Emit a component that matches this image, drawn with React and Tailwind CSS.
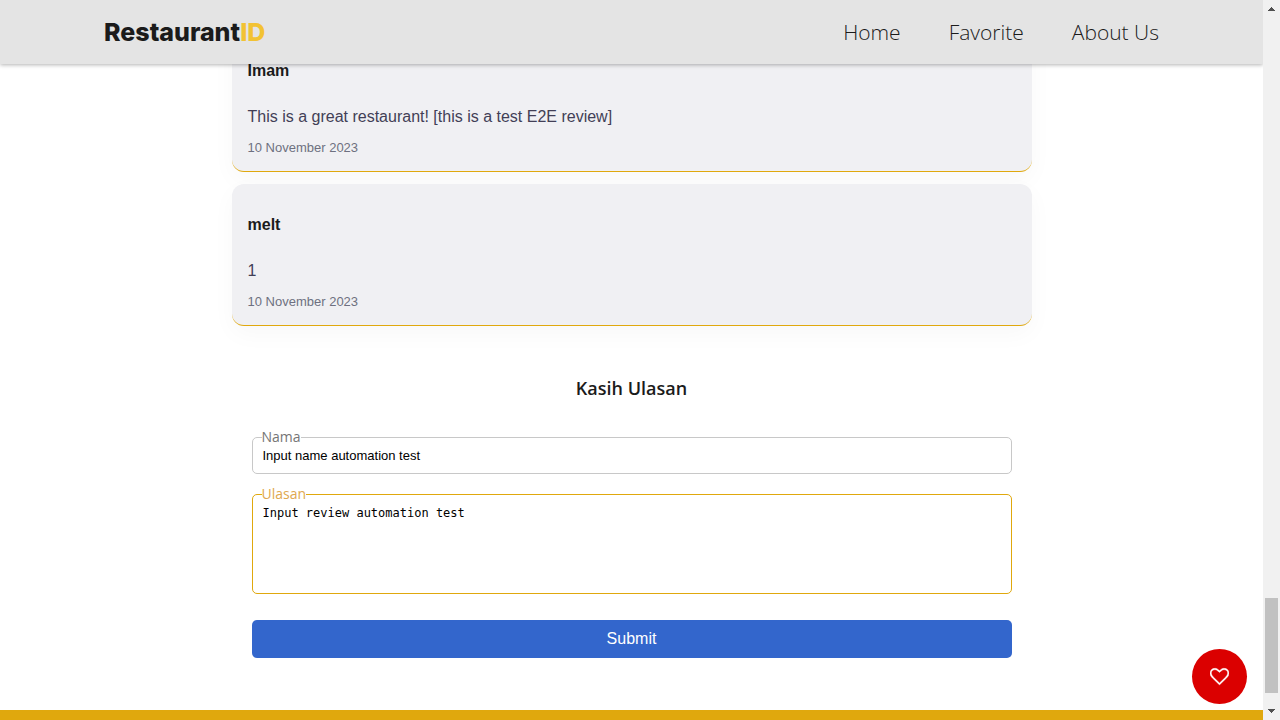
const reviews = [
  { name: "Imam", text: "This is a great restaurant! [this is a test E2E review]", date: "10 November 2023" },
  { name: "melt", text: "1", date: "10 November 2023" },
];

function Header() {
  return (
    <header className="absolute inset-x-0 top-0 z-10 flex h-16 items-center justify-between bg-[#e4e4e4] px-26 shadow-[0_1px_4px_rgba(0,0,0,0.3)]">
      <a href="#home" className="font-['Inter',sans-serif] text-[25px] leading-7 font-extrabold text-[#1b1b1b]">
        Restaurant<span className="text-[#f2c233]">ID</span>
      </a>
      <nav className="flex gap-12 font-['Open_Sans',sans-serif] text-[21px] leading-7 font-[330] text-[#1b1b1b]">
        <a href="#home">Home</a>
        <a href="#favorite">Favorite</a>
        <a href="#about">About Us</a>
      </nav>
    </header>
  );
}

function Review({ name, text, date }) {
  return (
    <li className="rounded-xl border-b border-[#e0a80d] bg-[#f0f0f3] px-4 pt-[31px] pb-[15px] shadow-[0_8px_24px_rgba(0,0,0,0.03)]">
      <h3 className="text-base leading-5 font-bold text-[#1b1b1b]">{name}</h3>
      <p className="mt-[26px] text-base leading-5 text-[#423f56]">{text}</p>
      <p className="mt-[13px] text-[13px] leading-4 text-[#6e7080]">{date}</p>
    </li>
  );
}

function ReviewForm() {
  return (
    <form className="px-5" onSubmit={(e) => e.preventDefault()}>
      <fieldset className="rounded-[5px] border border-[#c8c8c8] px-[9px] pb-[7px]">
        <legend className="font-['Open_Sans',sans-serif] text-sm leading-[18px] text-[#757575]">
          <label htmlFor="name">Nama</label>
        </legend>
        <input
          id="name"
          type="text"
          defaultValue="Input name automation test"
          className="block h-5 w-full px-px text-[13px] leading-5 text-black outline-none"
        />
      </fieldset>
      <fieldset className="mt-[11px] rounded-[5px] border border-[#e0a80d] px-[9px]">
        <legend className="font-['Open_Sans',sans-serif] text-sm leading-[18px] text-[#e0a84f]">
          <label htmlFor="review">Ulasan</label>
        </legend>
        <textarea
          id="review"
          defaultValue="Input review automation test"
          className="block h-[90px] w-full resize-none px-px font-['DejaVu_Sans_Mono',monospace] text-xs leading-5 text-black outline-none"
        />
      </fieldset>
      <button type="submit" className="mt-[26px] h-[38px] w-full rounded-[5px] bg-[#3366cc] text-base text-white">
        Submit
      </button>
    </form>
  );
}

function LikeButton() {
  return (
    <button
      type="button"
      aria-label="Like this restaurant"
      className="absolute right-4 bottom-4 flex size-[55px] items-center justify-center rounded-full bg-[#db0000] text-white"
    >
      <svg viewBox="0 0 1792 1792" className="size-[19px]" fill="currentColor" stroke="currentColor" strokeWidth="40" aria-hidden="true">
        <path d="M1664 596q0-81-21.5-143t-55-98.5-81.5-59.5-94-31-98-8-112 25.5-110.5 64-86.5 72-60 61.5q-18 22-49 22t-49-22q-24-28-60-61.5t-86.5-72-110.5-64-112-25.5-98 8-94 31-81.5 59.5-55 98.5-21.5 143q0 168 187 355l581 560 580-559q188-188 188-356zm128 0q0 221-229 450l-623 600q-18 18-44 18t-44-18l-624-602q-10-8-27.5-26t-55.5-65.5-68-97.5-53.5-121-23.5-138q0-220 127-344t351-124q62 0 126.5 21.5t120 58 95.5 68.5 76 68q36-36 76-68t95.5-68.5 120-58 126.5-21.5q224 0 351 124t127 344z" />
      </svg>
    </button>
  );
}

function ScrollTrack() {
  return (
    <div aria-hidden="true" className="relative z-20 flex w-[17px] shrink-0 flex-col items-center bg-[#f1f1f1] text-[#505050]">
      <svg viewBox="0 0 17 17" className="size-[17px]" fill="currentColor" shapeRendering="crispEdges">
        <path d="M8 7h1v1h1v1h1v1h1v1H5v-1h1V9h1V8h1z" />
      </svg>
      <div className="grow-[581]" />
      <div className="w-[13px] grow-[95] bg-[#c1c1c1]" />
      <div className="grow-[10]" />
      <svg viewBox="0 0 17 17" className="size-[17px]" fill="currentColor" shapeRendering="crispEdges">
        <path d="M5 6h7v1h-1v1h-1v1H9v1H8V9H7V8H6V7H5z" />
      </svg>
    </div>
  );
}

export default function App() {
  return (
    <div className="flex min-h-screen bg-white font-['Liberation_Sans',Arial,sans-serif]">
      <div className="relative flex min-w-0 grow flex-col">
        <Header />
        <main className="mx-auto w-full max-w-[800px] grow pt-[30px] pb-[52px]">
          <ul className="flex flex-col gap-3">
            {reviews.map((review) => (
              <Review key={review.name} {...review} />
            ))}
          </ul>
          <h2 className="mt-12 mb-[26px] text-center font-['Open_Sans',sans-serif] text-lg leading-7 font-semibold text-[#1b1b1b]">
            Kasih Ulasan
          </h2>
          <ReviewForm />
        </main>
        <footer className="h-2.5 bg-[#e0a80d]" />
        <LikeButton />
      </div>
      <ScrollTrack />
    </div>
  );
}
